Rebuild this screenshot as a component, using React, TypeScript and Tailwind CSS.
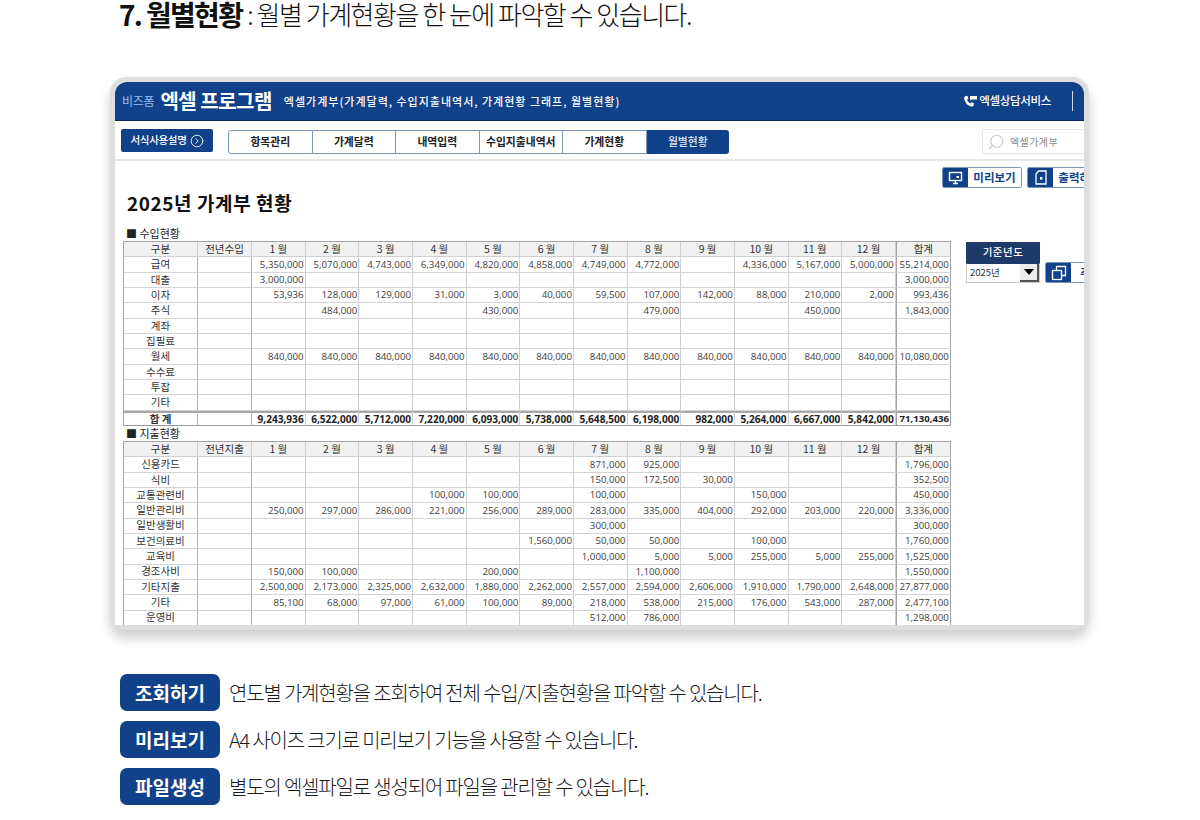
import { CircleChevronRight, Search } from "lucide-react";

const KR = "font-['Noto_Sans_CJK_KR',sans-serif]";
const MONTHS = ["1 월", "2 월", "3 월", "4 월", "5 월", "6 월", "7 월", "8 월", "9 월", "10 월", "11 월", "12 월"];
const GRID = "grid grid-cols-[74px_54px_repeat(12,53.67px)_55px] auto-rows-[15.33px] w-[828px] border-t border-l border-[#a3a3a3]";

type Row = [string, ...string[]];

const income: Row[] = [
  ["급여", "5,350,000", "5,070,000", "4,743,000", "6,349,000", "4,820,000", "4,858,000", "4,749,000", "4,772,000", "", "4,336,000", "5,167,000", "5,000,000", "55,214,000"],
  ["대출", "3,000,000", "", "", "", "", "", "", "", "", "", "", "", "3,000,000"],
  ["이자", "53,936", "128,000", "129,000", "31,000", "3,000", "40,000", "59,500", "107,000", "142,000", "88,000", "210,000", "2,000", "993,436"],
  ["주식", "", "484,000", "", "", "430,000", "", "", "479,000", "", "", "450,000", "", "1,843,000"],
  ["계좌", "", "", "", "", "", "", "", "", "", "", "", "", ""],
  ["집필료", "", "", "", "", "", "", "", "", "", "", "", "", ""],
  ["월세", "840,000", "840,000", "840,000", "840,000", "840,000", "840,000", "840,000", "840,000", "840,000", "840,000", "840,000", "840,000", "10,080,000"],
  ["수수료", "", "", "", "", "", "", "", "", "", "", "", "", ""],
  ["투잡", "", "", "", "", "", "", "", "", "", "", "", "", ""],
  ["기타", "", "", "", "", "", "", "", "", "", "", "", "", ""],
];
const incomeTotal: Row = ["합 계", "9,243,936", "6,522,000", "5,712,000", "7,220,000", "6,093,000", "5,738,000", "5,648,500", "6,198,000", "982,000", "5,264,000", "6,667,000", "5,842,000", "71,130,436"];

const expense: Row[] = [
  ["신용카드", "", "", "", "", "", "", "871,000", "925,000", "", "", "", "", "1,796,000"],
  ["식비", "", "", "", "", "", "", "150,000", "172,500", "30,000", "", "", "", "352,500"],
  ["교통관련비", "", "", "", "100,000", "100,000", "", "100,000", "", "", "150,000", "", "", "450,000"],
  ["일반관리비", "250,000", "297,000", "286,000", "221,000", "256,000", "289,000", "283,000", "335,000", "404,000", "292,000", "203,000", "220,000", "3,336,000"],
  ["일반생활비", "", "", "", "", "", "", "300,000", "", "", "", "", "", "300,000"],
  ["보건의료비", "", "", "", "", "", "1,560,000", "50,000", "50,000", "", "100,000", "", "", "1,760,000"],
  ["교육비", "", "", "", "", "", "", "1,000,000", "5,000", "5,000", "255,000", "5,000", "255,000", "1,525,000"],
  ["경조사비", "150,000", "100,000", "", "", "200,000", "", "", "1,100,000", "", "", "", "", "1,550,000"],
  ["기타지출", "2,500,000", "2,173,000", "2,325,000", "2,632,000", "1,880,000", "2,262,000", "2,557,000", "2,594,000", "2,606,000", "1,910,000", "1,790,000", "2,648,000", "27,877,000"],
  ["기타", "85,100", "68,000", "97,000", "61,000", "100,000", "89,000", "218,000", "538,000", "215,000", "176,000", "543,000", "287,000", "2,477,100"],
  ["운영비", "", "", "", "", "", "", "512,000", "786,000", "", "", "", "", "1,298,000"],
];

function HeadCell({ children, sum }: { children?: React.ReactNode; sum?: boolean }) {
  return (
    <div className={`flex items-center justify-center bg-[#f1f1f1] border-b border-r border-b-[#d0d0d0] ${sum ? "border-r-[#a3a3a3] border-l border-l-[#a3a3a3]" : "border-r-[#d0d0d0]"} ${KR} text-[10.5px] leading-none text-[#333]`}>
      {children}
    </div>
  );
}

function DataRow({ row, total }: { row: Row; total?: boolean }) {
  const [label, ...vals] = row;
  const border = total ? "border-b border-b-[#9a9a9a] border-t-2 border-t-[#a8a8a8]" : "border-b border-b-[#d4d4d4]";
  return (
    <>
      <div className={`flex items-center justify-center border-r border-r-[#b5b5b5] ${border} ${KR} text-[10.5px] leading-none text-[#333] ${total ? "font-bold" : ""}`}>{label}</div>
      <div className={`border-r border-r-[#b5b5b5] ${border}`} />
      {vals.map((v, i) => (
        <div
          key={i}
          className={`flex items-center justify-end pr-[1px] overflow-hidden whitespace-nowrap border-r ${i === 12 ? "border-r-[#a3a3a3] border-l border-l-[#a3a3a3]" : "border-r-[#d0d0d0]"} ${border} font-['Open_Sans',sans-serif] leading-none ${total ? (i === 12 ? "font-bold text-[#222] text-[9.6px]" : "font-bold text-[#222] text-[10.1px]") : "text-[#3c3c3c] text-[9.7px]"}`}
        >
          {v}
        </div>
      ))}
    </>
  );
}

function SheetTable({ first, rows, total }: { first: string; rows: Row[]; total?: Row }) {
  return (
    <div className={GRID}>
      <HeadCell>구분</HeadCell>
      <HeadCell>{first}</HeadCell>
      {MONTHS.map((m) => (
        <HeadCell key={m}>{m}</HeadCell>
      ))}
      <HeadCell sum>합계</HeadCell>
      {rows.map((r) => (
        <DataRow key={r[0]} row={r} />
      ))}
      {total && <DataRow row={total} total />}
    </div>
  );
}

const TABS = ["항목관리", "가계달력", "내역입력", "수입지출내역서", "가계현황"];

function Desc({ tag, text }: { tag: string; text: string }) {
  return (
    <div className="flex items-center h-[37px] gap-[9px]">
      <div className={`w-[100px] h-[37px] rounded-[7px] bg-[#114189] flex items-center justify-center text-white text-[19px] font-bold leading-none ${KR}`}>{tag}</div>
      <div className={`text-[20px] leading-none tracking-[-0.059em] text-[#1a1a1a] font-light ${KR} whitespace-nowrap`}>{text}</div>
    </div>
  );
}

export default function App() {
  return (
    <div className="w-[1200px] h-[820px] overflow-hidden bg-white flex flex-col">
      <div className={`pl-[119px] h-[28px] flex items-center whitespace-nowrap text-[#111] ${KR}`}>
        <span className="text-[28px] leading-none font-bold tracking-[-0.06em] -mt-px">7. 월별현황</span>
        <span className="text-[26px] leading-none font-light tracking-[-0.057em] ml-[5px] -mt-px">: 월별 가계현황을 한 눈에 파악할 수 있습니다.</span>
      </div>

      <div className="ml-[110px] mt-[49px] w-[979px] h-[553px] shrink-0 border-[5px] border-[#dedede] rounded-[16px] shadow-[0_8px_12px_rgba(0,0,0,0.2)] bg-white">
        <div className="w-[969px] h-[543px] overflow-hidden rounded-t-[12px] flex flex-col bg-white">
          <div className={`h-[39px] shrink-0 bg-[#114189] border-b border-[#0b2a5a] flex items-center text-white whitespace-nowrap ${KR}`}>
            <span className="ml-[7px] text-[12px] tracking-[-0.02em] text-[#9cc0ee] leading-none">비즈폼</span>
            <span className="ml-[6px] text-[20px] font-bold leading-none tracking-[-0.025em]">엑셀 프로그램</span>
            <span className="ml-[12px] text-[11px] font-medium leading-none tracking-[0.09em]">엑셀가계부(가계달력, 수입지출내역서, 가계현황 그래프, 월별현황)</span>
            <span className="ml-auto flex items-center">
              <svg width="16" height="13" viewBox="0 0 16 13">
                <path d="M2.2 1.2 L4.4 0.8 L5.4 3.6 L4.1 4.8 C4.7 6.4 5.8 7.6 7.4 8.4 L8.6 7.2 L11 8.4 L10.6 10.6 C10.3 11.4 9.4 11.8 8.4 11.6 C4.6 10.7 1.9 7.6 1.2 3.6 C1 2.6 1.4 1.6 2.2 1.2 Z" fill="#fff" />
                <path d="M7 1 H14 V4.6 H9 L7.6 5.6 V4.6 H7 Z" fill="#fff" />
              </svg>
              <span className="text-[11.5px] font-medium leading-none tracking-[-0.03em]">엑셀상담서비스</span>
            </span>
            <span className="ml-[21px] mr-[11px] w-px h-[20px] bg-[#cfd9ea]" />
          </div>

          <div className={`h-[40px] shrink-0 flex items-center border-b-2 border-[#e6e6e6] pl-[6px] ${KR}`}>
            <div className="w-[92px] h-[23px] mt-[1px] shrink-0 rounded-[2px] bg-[#114189] flex items-center justify-center gap-[3px] text-white text-[10.5px] font-medium tracking-[-0.03em] leading-none">
              서식사용설명
              <CircleChevronRight size={14} strokeWidth={1.5} />
            </div>
            <div className="ml-[15px] w-[501px] h-[24px] mt-[3px] flex shrink-0">
              {TABS.map((t, i) => (
                <div
                  key={t}
                  className={`flex-1 flex items-center justify-center text-[10.8px] font-bold leading-none text-[#222] whitespace-nowrap border-y border-r border-[#7c97b8] ${i === 0 ? "border-l rounded-l-[3px]" : ""}`}
                >
                  {t}
                </div>
              ))}
              <div className="flex-1 flex items-center justify-center text-[10.8px] font-medium leading-none text-[#dfe7f3] bg-[#114189] rounded-r-[3px]">월별현황</div>
            </div>
            <div className="ml-[253px] w-[110px] h-[25px] mt-[3px] shrink-0 border border-[#e6e6e6] rounded-[2px] flex items-center pl-[4px] text-[10px] leading-none text-[#8a8a8a] tracking-[0.04em]">
              <Search size={18} strokeWidth={1.6} className="text-[#cfcfcf] -scale-x-100" />
              <span className="ml-[5px]">엑셀가계부</span>
            </div>
          </div>

          <div className="flex-1 overflow-hidden flex flex-col">
            <div className="pt-[6px] pl-[827px] h-[27px] flex gap-[5px] shrink-0">
              <div className="w-[80px] h-[21px] shrink-0 flex rounded-[2px] border border-[#7c97b8] overflow-hidden">
                <div className="w-[25px] bg-[#114189] flex items-center justify-center -my-px">
                  <svg width="15" height="14" viewBox="0 0 15 14" fill="none" stroke="#fff" strokeWidth="1.4">
                    <rect x="1.5" y="1.5" width="12" height="8" />
                    <path d="M5 12.5 H10 M7.5 10 V12.5" />
                    <rect x="8.5" y="5" width="2.5" height="2" fill="#fff" stroke="none" />
                  </svg>
                </div>
                <div className={`flex-1 flex items-center justify-center text-[11.5px] font-bold leading-none text-[#114189] ${KR}`}>미리보기</div>
              </div>
              <div className="w-[80px] h-[21px] shrink-0 flex rounded-[2px] border border-[#7c97b8] overflow-hidden">
                <div className="w-[25px] bg-[#114189] flex items-center justify-center -my-px">
                  <svg width="12" height="15" viewBox="0 0 12 15" fill="none" stroke="#fff" strokeWidth="1.3">
                    <path d="M3.5 1 H11 V14 H1 V4 Z" />
                    <rect x="5" y="7" width="2.4" height="2.6" fill="#fff" stroke="none" />
                  </svg>
                </div>
                <div className={`flex-1 flex items-center justify-center text-[11.5px] font-bold leading-none text-[#114189] ${KR} whitespace-nowrap`}>출력하기</div>
              </div>
            </div>

            <div className="flex flex-1 pl-[8px]">
              <div className="w-[828px] shrink-0">
                <div className={`h-[30px] -mt-[1px] ml-[4px] flex items-center text-[19px] font-bold leading-none tracking-[0.03em] text-[#111] ${KR}`}>2025년 가계부 현황</div>
                <div className={`h-[15px] mt-[9px] ml-[3px] flex items-center text-[11px] leading-none text-[#222] ${KR}`}>■ 수입현황</div>
                <SheetTable first="전년수입" rows={income} total={incomeTotal} />
                <div className={`h-[15px] ml-[3px] flex items-center text-[11px] leading-none text-[#222] ${KR}`}>■ 지출현황</div>
                <SheetTable first="전년지출" rows={expense} />
              </div>

              <div className="ml-[15px] mt-[54px] shrink-0 flex items-end gap-[5px] self-start">
                <div className="w-[74px]">
                  <div className={`h-[21px] bg-[#1f3a68] flex items-center justify-center text-[10.5px] font-medium leading-none tracking-[0.05em] text-white ${KR}`}>기준년도</div>
                  <div className="h-[20px] border border-[#c8c8c8] border-t-[#1f3a68] flex items-center pl-[3px]">
                    <span className={`text-[9.5px] leading-none text-[#333] ${KR}`}>2025년</span>
                    <span className="ml-auto w-[19px] h-full bg-[#ececec] border-r-2 border-b-2 border-[#555] flex items-center justify-center">
                      <span className="w-0 h-0 border-x-[5px] border-x-transparent border-t-[6px] border-t-black" />
                    </span>
                  </div>
                </div>
                <div className="w-[60px] h-[21px] flex rounded-[2px] border border-[#7c97b8] overflow-hidden">
                  <div className="w-[25px] bg-[#114189] flex items-center justify-center -my-px shrink-0">
                    <svg width="16" height="16" viewBox="0 0 16 16" fill="none" stroke="#fff" strokeWidth="1.3">
                      <rect x="1.5" y="5.5" width="9" height="9" />
                      <path d="M5.5 5.5 V1.5 H14.5 V10.5 H10.5" />
                    </svg>
                  </div>
                  <div className={`pl-[9px] flex items-center text-[11.5px] font-bold leading-none text-[#114189] ${KR} whitespace-nowrap`}>추가</div>
                </div>
              </div>
            </div>
          </div>
        </div>
      </div>

      <div className="mt-[44px] ml-[120px] flex flex-col gap-[10px]">
        <Desc tag="조회하기" text="연도별 가계현황을 조회하여 전체 수입/지출현황을 파악할 수 있습니다." />
        <Desc tag="미리보기" text="A4 사이즈 크기로 미리보기 기능을 사용할 수 있습니다." />
        <Desc tag="파일생성" text="별도의 엑셀파일로 생성되어 파일을 관리할 수 있습니다." />
      </div>
    </div>
  );
}
